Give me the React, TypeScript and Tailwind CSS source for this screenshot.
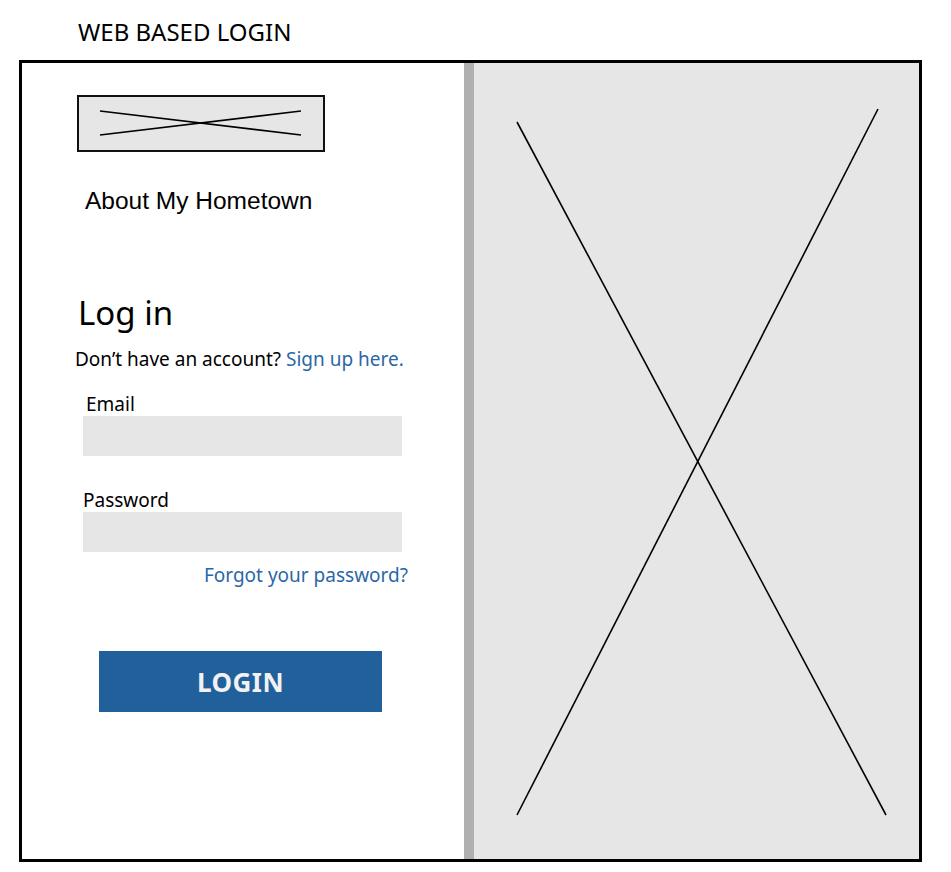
import React from 'react';

const noto = { fontFamily: '"Noto Sans", "Open Sans", sans-serif' };
const arial = { fontFamily: '"Liberation Sans", Arial, sans-serif' };

const Placeholder = ({ w, h, lines }: { w: number; h: number; lines: number[][] }) => (
  <svg width={w} height={h} viewBox={`0 0 ${w} ${h}`} className="block">
    {lines.map((l, i) => (
      <line key={i} x1={l[0]} y1={l[1]} x2={l[2]} y2={l[3]} stroke="#000" strokeWidth={1.6} />
    ))}
  </svg>
);

export default function App() {
  return (
    <div className="w-[951px] h-[872px] bg-white text-black overflow-hidden">
      {/* Page title */}
      <div className="pt-[16px] pl-[78px] text-[24px] leading-[32px]" style={noto}>
        WEB BASED LOGIN
      </div>

      {/* Frame */}
      <div className="mt-[12px] ml-[19px] w-[903px] h-[802px] border-[3px] border-black flex">
        {/* Left: login form */}
        <div className="w-[443px] h-full bg-white flex flex-col pt-[32px]">
          <div className="ml-[55px] w-[248px] h-[57px] border-2 border-[#111] bg-[#e6e6e6]">
            <Placeholder w={244} h={53} lines={[[21, 14, 222, 38], [21, 38, 222, 14]]} />
          </div>

          <div className="ml-[63px] mt-[35px] text-[24.5px] leading-[28px]" style={arial}>
            About My Hometown
          </div>

          <div style={noto}>
            <h1 className="ml-[56px] mt-[78px] text-[33px] leading-[40px]">Log in</h1>
            <p className="ml-[53px] mt-[14px] text-[19px] leading-[24px]">
              Don’t have an account? <span className="text-[#2b67a6]">Sign up here.</span>
            </p>

            <label className="block ml-[64px] mt-[22px] text-[19px] leading-[23px]">Email</label>
            <div className="ml-[61px] w-[319px] h-[40px] bg-[#e6e6e6]" />

            <label className="block ml-[61px] mt-[33px] text-[19px] leading-[23px]">Password</label>
            <div className="ml-[61px] w-[319px] h-[40px] bg-[#e6e6e6]" />

            <div className="ml-[61px] w-[325px] mt-[11px] text-right text-[19px] leading-[24px] text-[#2b67a6]">
              Forgot your password?
            </div>

            <button className="ml-[77px] mt-[64px] w-[283px] h-[61px] pt-[2px] bg-[#21609a] text-[#f2f2f2] text-[26px] font-bold tracking-[0.5px] flex items-center justify-center">
              LOGIN
            </button>
          </div>
        </div>

        {/* Divider */}
        <div className="w-[10px] h-full bg-[#b0b0b0]" />

        {/* Right: image placeholder */}
        <div className="flex-1 h-full bg-[#e6e6e6]">
          <Placeholder w={445} h={796} lines={[[43, 59, 412, 752], [404, 46, 43, 752]]} />
        </div>
      </div>
    </div>
  );
}
